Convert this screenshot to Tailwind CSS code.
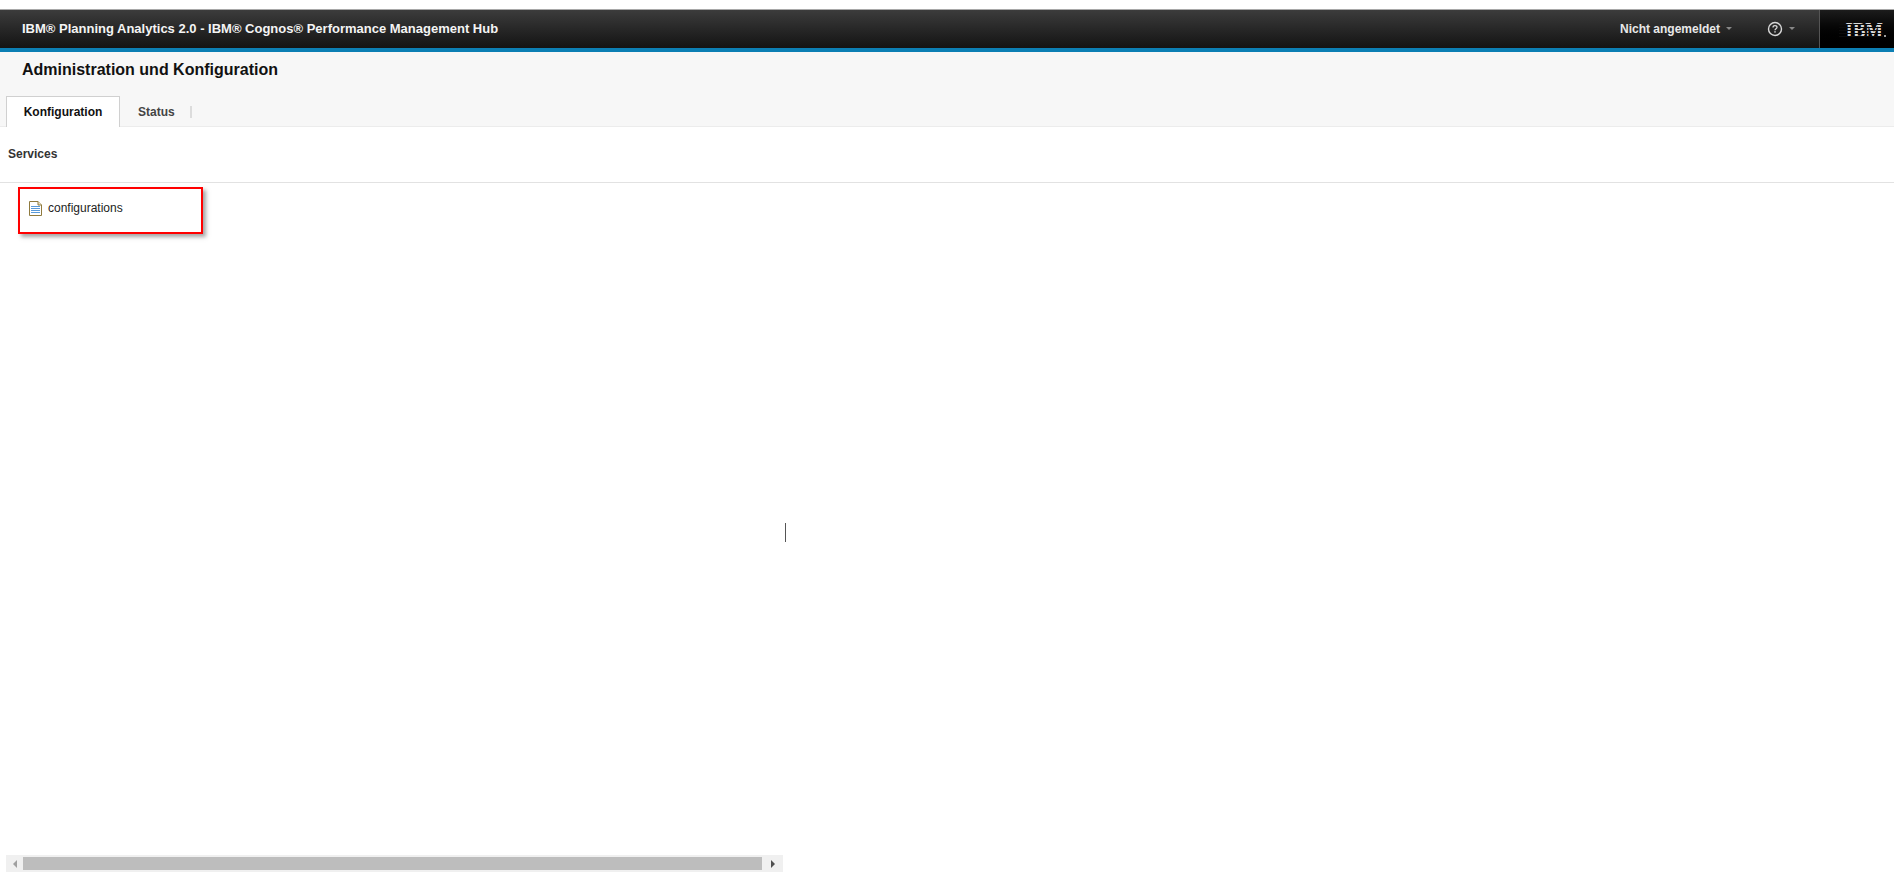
<!DOCTYPE html>
<html lang="de">
<head>
    <meta charset="UTF-8">
    <title>IBM Planning Analytics - Administration und Konfiguration</title>
    <script src="https://cdn.jsdelivr.net/npm/@tailwindcss/browser@4"></script>
</head>
<body class="bg-white h-[894px] w-[1894px] overflow-hidden font-['Liberation_Sans',Arial,sans-serif] flex flex-col relative">
    <div class="h-[9px] bg-white"></div>
    <!-- top bar -->
    <header class="h-[43px] border-t border-[#a8a8a8] border-b-4 border-b-[#0c7fb4] bg-gradient-to-b from-[#3c3c3c] to-[#141414] flex items-stretch text-white">
        <div class="pl-[22px] flex-1 flex items-center text-[13px] font-bold text-[#f4f4f4] pb-[1px]">IBM® Planning Analytics 2.0 - IBM® Cognos® Performance Management Hub</div>
        <div class="flex items-center text-xs font-bold text-[#e8e8e8] pb-[1px]">
            Nicht angemeldet
            <span class="ml-[6px] w-0 h-0 border-x-[3px] border-x-transparent border-t-[3px] border-t-[#888]"></span>
        </div>
        <div class="flex items-center ml-[35px] mr-[24px] pb-[1px]">
            <svg width="16" height="16" viewBox="0 0 16 16" fill="none">
                <circle cx="8" cy="8" r="6.5" stroke="#d8d8d8" stroke-width="1.4"/>
                <path d="M6 6.400C6 5.200 6.900 4.600 8 4.600s2 .7 2 1.700c0 1.500-2 1.500-2 3" stroke="#d8d8d8" stroke-width="1.300"/>
                <rect x="7.300" y="10.200" width="1.400" height="1.400" fill="#d8d8d8"/>
            </svg>
            <span class="ml-[6px] w-0 h-0 border-x-[3px] border-x-transparent border-t-[3px] border-t-[#888]"></span>
        </div>
        <div class="w-[75px] bg-gradient-to-b from-[#1c1c1c] to-black border-l border-[#555] flex items-center justify-end pr-[11px]">
            <div class="relative">
                <span class="block font-['Liberation_Serif',serif] font-bold text-[22px] leading-[15px] scale-x-[0.85] origin-right text-[#d8d8d8]">IBM</span>
                <!-- stripes across the logo -->
                <div class="absolute inset-0 bg-[repeating-linear-gradient(to_bottom,transparent_0px,transparent_2px,#0c0c0c_2px,#0c0c0c_3px)]"></div>
                <div class="absolute -right-[3px] bottom-[0px] w-[2px] h-[2px] rounded-full bg-[#cfcfcf]"></div>
            </div>
        </div>
    </header>
    <!-- title + tabs -->
    <section class="h-[75px] bg-[#f7f7f7] flex flex-col border-b border-[#ececec] shrink-0">
        <h1 class="pl-[22px] pt-[8px] text-base leading-[20px] font-bold text-[#111]">Administration und Konfiguration</h1>
        <nav class="flex mt-auto pl-[6px] items-stretch h-[31px] text-xs font-bold -mb-px">
            <div class="w-[114px] bg-white border border-b-0 border-[#d0d0d0] flex items-center justify-center text-[#111]">Konfiguration</div>
            <div class="flex items-center ml-[18px] text-[#444]">Status</div>
            <div class="ml-[15px] self-center w-[2px] h-[12px] bg-[#dcdcdc]"></div>
        </nav>
    </section>
    <!-- services -->
    <div class="h-[56px] border-b border-[#e2e2e2] pl-[8px] pt-[20px] text-xs leading-[14px] font-bold text-[#333] shrink-0">Services</div>
    <div class="flex-1 pl-[18px] pt-[4px] relative">
        <div class="w-[185px] h-[47px] border-[2px] border-[#f00] shadow-[3px_3px_4px_rgba(90,90,90,0.55)] flex items-start pl-[9px] pt-[12px] text-xs text-[#222]">
            <svg width="13" height="15" viewBox="0 0 13 15" class="shrink-0">
                <path d="M.5.5h8.500l3.500 3.500v10.500h-12z" fill="#fff" stroke="#8f7a3e"/>
                <path d="M9 .5v3.500h3.500" fill="#efe6c4" stroke="#8f7a3e"/>
                <path d="M2 5.500h9M2 7.500h9M2 9.500h9M2 11.500h9" stroke="#5a9ad8"/>
            </svg>
            <span class="ml-[6px] leading-[14px]">configurations</span>
        </div>
    </div>
    <!-- horizontal scrollbar -->
    <div class="ml-[6px] mb-[22px] w-[777px] h-[17px] bg-[#f0f0f0] flex items-center shrink-0">
        <div class="w-[17px] flex justify-center"><span class="w-0 h-0 border-y-[4px] border-y-transparent border-r-[4px] border-r-[#a0a0a0]"></span></div>
        <div class="w-[739px] h-[13px] bg-[#bdbdbd]"></div>
        <div class="w-[21px] flex justify-center"><span class="w-0 h-0 border-y-[4px] border-y-transparent border-l-[4px] border-l-[#505050]"></span></div>
    </div>
    <!-- text cursor -->
    <div class="absolute left-[785px] top-[523px] w-px h-[19px] bg-[#555]"></div>
</body>
</html>
